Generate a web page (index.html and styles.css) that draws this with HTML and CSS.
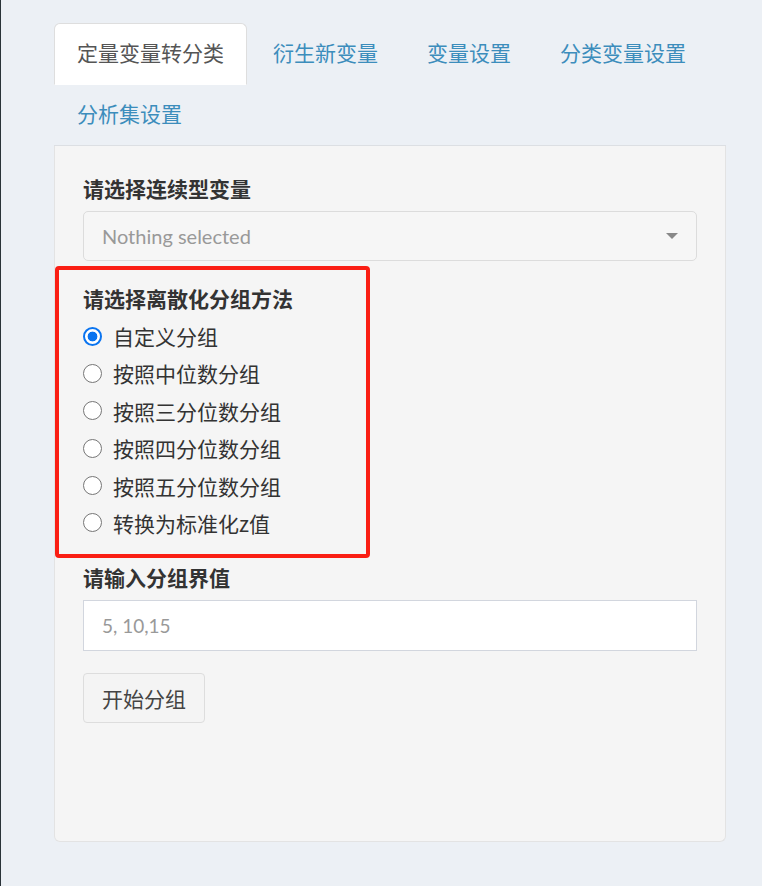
FILE: index.html
```html
<!DOCTYPE html>
<html lang="zh">
<head>
<meta charset="utf-8">
<title>定量变量转分类</title>
<link rel="stylesheet" href="styles.css">
</head>
<body>
<div class="page">
  <ul class="tabs">
    <li class="tab active"><a>定量变量转分类</a></li>
    <li class="tab"><a>衍生新变量</a></li>
    <li class="tab"><a>变量设置</a></li>
    <li class="tab"><a>分类变量设置</a></li>
    <li class="tab"><a>分析集设置</a></li>
  </ul>
  <div class="panel">
    <div class="group">
      <label class="label">请选择连续型变量</label>
      <div class="select">
        <span class="select-text">Nothing selected</span>
        <span class="caret"></span>
      </div>
    </div>
    <div class="group radios">
      <label class="label">请选择离散化分组方法</label>
      <div class="options">
        <label class="radio"><input type="radio" name="m" checked><span>自定义分组</span></label>
        <label class="radio"><input type="radio" name="m"><span>按照中位数分组</span></label>
        <label class="radio"><input type="radio" name="m"><span>按照三分位数分组</span></label>
        <label class="radio"><input type="radio" name="m"><span>按照四分位数分组</span></label>
        <label class="radio"><input type="radio" name="m"><span>按照五分位数分组</span></label>
        <label class="radio"><input type="radio" name="m"><span>转换为标准化z值</span></label>
      </div>
    </div>
    <div class="group">
      <label class="label">请输入分组界值</label>
      <input class="text-input" type="text" placeholder="5, 10,15">
    </div>
    <button class="btn">开始分组</button>
    <div class="highlight"></div>
  </div>
</div>
</body>
</html>
```
FILE: styles.css
```css
html, body {
  margin: 0;
  padding: 0;
}
body {
  background: #ecf0f5;
  border-left: 1px solid #2a3338;
  min-height: 886px;
  box-sizing: border-box;
  font-family: "Noto Sans CJK SC", "Noto Sans", sans-serif;
  color: #333;
}
.page {
  width: 672px;
  margin-left: 53px;
  padding-top: 23px;
}
.tabs {
  list-style: none;
  margin: 0;
  padding: 0;
  display: flex;
  flex-wrap: wrap;
  border-bottom: 1px solid #dcdfe3;
}
.tab {
  margin: 0 3px -1px 0;
}
.tab a {
  display: block;
  padding: 13px 22px 17px;
  font-size: 21px;
  line-height: 30px;
  color: #3c8dbc;
  border: 1px solid transparent;
  border-radius: 6px 6px 0 0;
}
.tab.active a {
  background: #fff;
  color: #555;
  border-color: #dedede;
  border-bottom-color: transparent;
}
.panel {
  position: relative;
  background: #f5f5f5;
  border: 1px solid #e3e3e3;
  border-top: none;
  border-radius: 0 0 6px 6px;
  padding: 27px 28px 0;
  height: 696px;
  box-sizing: border-box;
}
.group {
  display: flex;
  flex-direction: column;
  margin-bottom: 22px;
}
.label {
  font-weight: bold;
  font-size: 21px;
  line-height: 30px;
  color: #333;
  margin-bottom: 8px;
}
.select {
  height: 50px;
  box-sizing: border-box;
  border: 1px solid #dcdcdc;
  border-radius: 5px;
  background: #f6f6f6;
  display: flex;
  align-items: center;
  justify-content: space-between;
  padding: 0 18px 0 18px;
}
.select-text {
  font-family: Lato, "Noto Sans", sans-serif;
  font-size: 20px;
  color: #999;
}
.caret {
  width: 0;
  height: 0;
  border-left: 6px solid transparent;
  border-right: 6px solid transparent;
  border-top: 6px solid #888;
}
.radios {
  margin-bottom: 24px;
}
.options {
  display: flex;
  flex-direction: column;
  gap: 7.4px;
}
.radio {
  display: flex;
  align-items: center;
  height: 30px;
  font-size: 21px;
  color: #333;
}
.radio input {
  appearance: none;
  -webkit-appearance: none;
  width: 19px;
  height: 19px;
  margin: 0 11px 0 0;
  border: 1.5px solid #767676;
  border-radius: 50%;
  background: #fff;
  box-sizing: border-box;
  flex: none;
}
.radio input:checked {
  border: 2px solid #0a74f0;
  background: radial-gradient(circle, #0a74f0 0 4.6px, #fff 5.2px);
}
.text-input {
  height: 51px;
  box-sizing: border-box;
  border: 1px solid #d2d6de;
  border-radius: 0;
  background: #fff;
  padding: 0 18px;
  font-family: Lato, "Noto Sans", sans-serif;
  font-size: 19px;
  outline: none;
}
.text-input::placeholder {
  color: #999;
}
.btn {
  display: block;
  margin-top: 2px;
  height: 50px;
  padding: 0 18px;
  background: #f4f4f4;
  border: 1px solid #dddddd;
  border-radius: 4px;
  font-family: "Noto Sans CJK SC", "Noto Sans", sans-serif;
  font-size: 21px;
  color: #444;
}
.highlight {
  position: absolute;
  left: 0;
  top: 120px;
  width: 315px;
  height: 292px;
  box-sizing: border-box;
  border: 4px solid #fa1e14;
  border-radius: 4px;
  pointer-events: none;
}
```
